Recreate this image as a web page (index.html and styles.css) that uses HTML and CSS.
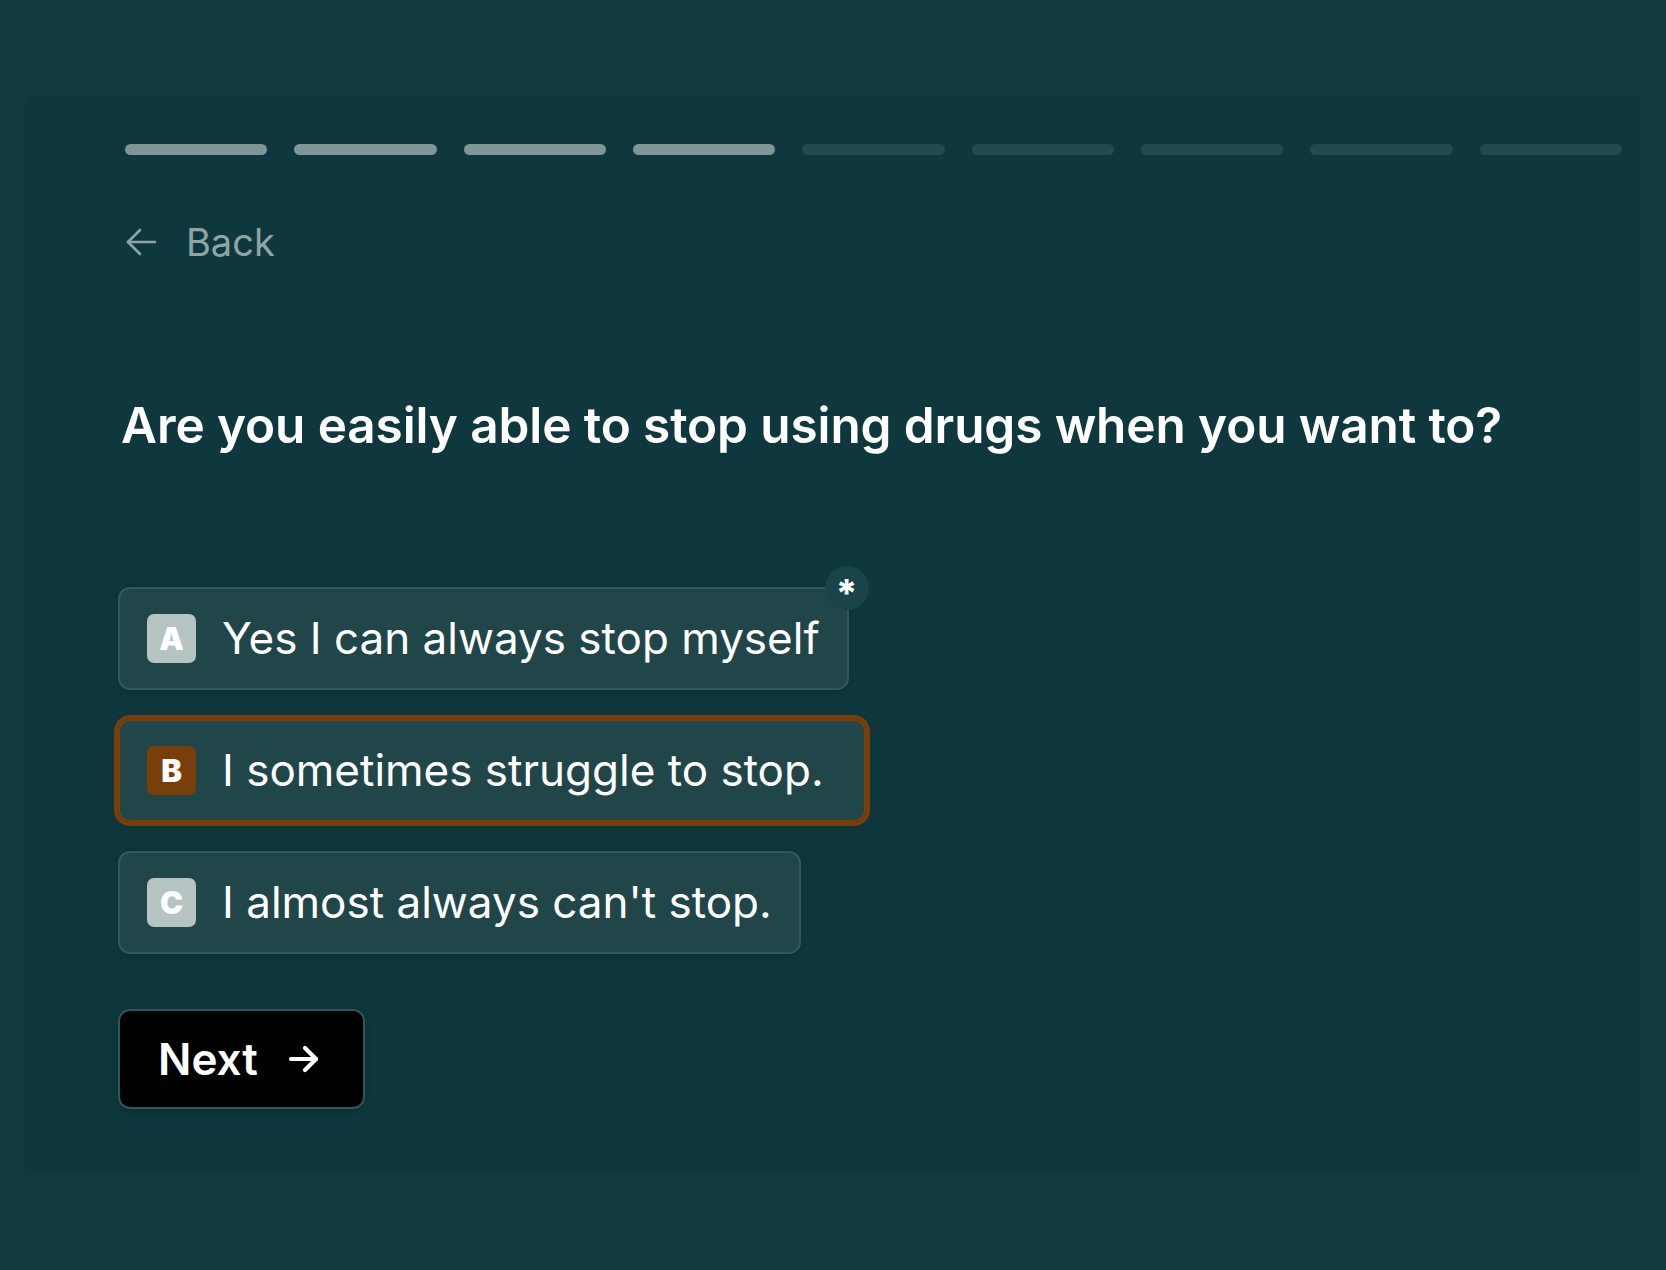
FILE: index.html
```html
<!DOCTYPE html>
<html lang="en">
<head>
<meta charset="utf-8">
<title>Question</title>
<link rel="stylesheet" href="styles.css">
</head>
<body>
<main class="panel">
  <div class="progress">
    <span class="seg done"></span>
    <span class="seg done"></span>
    <span class="seg done"></span>
    <span class="seg done"></span>
    <span class="seg"></span>
    <span class="seg"></span>
    <span class="seg"></span>
    <span class="seg"></span>
    <span class="seg"></span>
  </div>

  <a class="back" href="#">
    <svg class="back-icon" width="32" height="30" viewBox="0 0 32 30" fill="none" stroke="currentColor" stroke-width="2.6" stroke-linecap="round" stroke-linejoin="round">
      <path d="M30 15H3"/>
      <path d="M15 3L3 15L15 27"/>
    </svg>
    <span>Back</span>
  </a>

  <h1 class="question">Are you easily able to stop using drugs when you want to?</h1>

  <div class="options">
    <div class="option-wrap">
      <button class="option">
        <span class="key">A</span>
        <span class="label">Yes I can always stop myself</span>
      </button>
      <span class="required">*</span>
    </div>
    <div class="option-wrap">
      <button class="option selected">
        <span class="key">B</span>
        <span class="label">I sometimes struggle to stop.</span>
      </button>
    </div>
    <div class="option-wrap">
      <button class="option">
        <span class="key">C</span>
        <span class="label">I almost always can't stop.</span>
      </button>
    </div>
  </div>

  <button class="next">
    <span>Next</span>
    <svg width="32" height="30" viewBox="0 0 32 30" fill="none" stroke="currentColor" stroke-width="4.2" stroke-linecap="round" stroke-linejoin="round">
      <path d="M3 15H28"/>
      <path d="M17 4L28 15L17 26"/>
    </svg>
  </button>
</main>
</body>
</html>
```

FILE: styles.css
```css
* {
  box-sizing: border-box;
}

html, body {
  margin: 0;
  padding: 0;
}

body {
  background: #133b41;
  font-family: Inter, "Noto Sans", "Liberation Sans", sans-serif;
  color: #ffffff;
  width: 1666px;
  height: 1270px;
  overflow: hidden;
  padding: 96px 28px 0 27px;
}

.panel {
  background: #0e383d;
  height: 1076px;
  padding: 48px 16px 0 98px;
  box-shadow: 0 0 8px rgba(10, 45, 50, 0.35);
  display: flex;
  flex-direction: column;
  align-items: flex-start;
}

.progress {
  display: flex;
  gap: 27px;
  width: 100%;
}

.seg {
  flex: 1;
  height: 11px;
  border-radius: 6px;
  background: #234a4f;
}

.seg.done {
  background: #7f9597;
}

.back {
  display: flex;
  align-items: center;
  gap: 29px;
  margin-top: 67px;
  height: 40px;
  color: #8ea4a5;
  text-decoration: none;
  font-size: 38px;
  line-height: 40px;
  font-weight: 400;
}

.back-icon {
  display: block;
}

.question {
  margin: 135px 0 0 -4px;
  font-size: 49.5px;
  line-height: 56px;
  font-weight: 600;
  letter-spacing: -0.1px;
  color: #ffffff;
}

.options {
  margin-top: 134px;
  margin-left: -7px;
  display: flex;
  flex-direction: column;
  align-items: flex-start;
  gap: 29px;
}

.option-wrap {
  position: relative;
}

.option {
  display: flex;
  align-items: center;
  gap: 26px;
  padding: 25px 27px 25px 27px;
  background: #20464a;
  border: 2px solid #32585b;
  border-radius: 12px;
  box-shadow: 0 2px 8px rgba(0, 0, 0, 0.18);
  font-family: inherit;
  color: #ffffff;
  cursor: pointer;
}

.option.selected {
  border-color: #7a3e0b;
  outline: 4px solid #7a3e0b;
  padding-right: 40px;
}

.key {
  width: 49px;
  height: 49px;
  flex: none;
  border-radius: 7px;
  background: #b5c3c3;
  color: #ffffff;
  font-size: 31px;
  font-weight: 900;
  display: flex;
  align-items: center;
  justify-content: center;
}

.selected .key {
  background: #7a3e0b;
}

.label {
  font-size: 44px;
  line-height: 49px;
  font-weight: 400;
  white-space: nowrap;
}

.required {
  position: absolute;
  top: -21px;
  right: -20px;
  width: 44px;
  height: 44px;
  padding-top: 11px;
  border-radius: 50%;
  background: #19444a;
  color: #ffffff;
  font-size: 38px;
  font-weight: 800;
  display: flex;
  align-items: flex-start;
  justify-content: center;
  line-height: 33px;
}

.next {
  margin-top: 55px;
  margin-left: -7px;
  height: 100px;
  display: flex;
  align-items: center;
  gap: 30px;
  padding: 0 43px 0 38px;
  background: #000000;
  border: 2px solid #2d575a;
  border-radius: 12px;
  box-shadow: 0 3px 10px rgba(0, 0, 0, 0.2);
  color: #ffffff;
  font-family: inherit;
  font-size: 44px;
  font-weight: 600;
  cursor: pointer;
}

.next svg {
  display: block;
}
```
